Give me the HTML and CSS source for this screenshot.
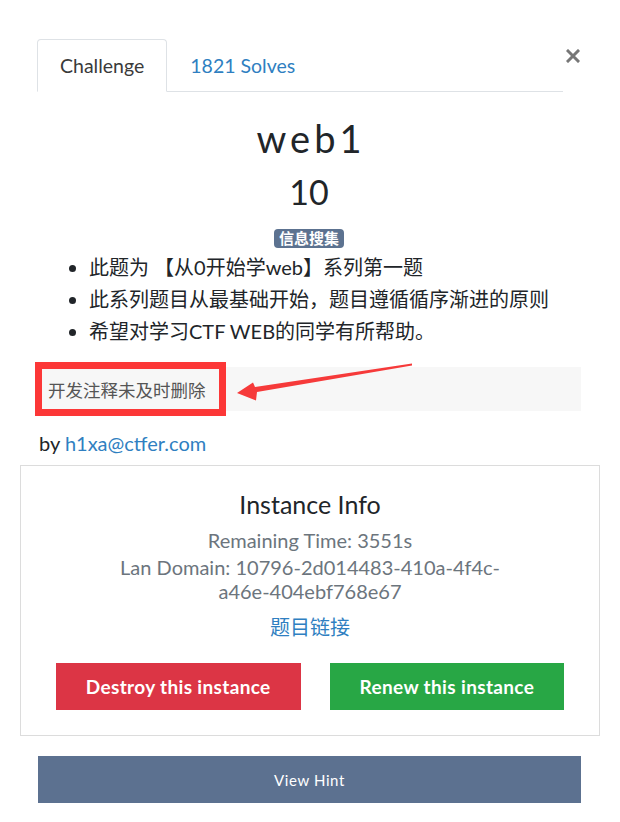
FILE: index.html
```html
<!DOCTYPE html>
<html lang="zh-CN">
<head>
<meta charset="utf-8">
<title>Challenge</title>
<link rel="stylesheet" href="styles.css">
</head>
<body>
<div class="modal">
  <div class="tabs-row">
    <ul class="tabs">
      <li class="tab active">Challenge</li>
      <li class="tab"><a href="#">1821 Solves</a></li>
    </ul>
    <button class="close" aria-label="Close">
      <svg width="14" height="14" viewBox="0 0 14 14"><path d="M2 2 L12 12 M12 2 L2 12" stroke="#777" stroke-width="3" stroke-linecap="square"/></svg>
    </button>
  </div>

  <h2 class="title">web1</h2>
  <h3 class="value">10</h3>
  <div class="tags"><span class="badge">信息搜集</span></div>

  <ul class="desc">
    <li>此题为 【从0开始学web】系列第一题</li>
    <li>此系列题目从最基础开始，题目遵循循序渐进的原则</li>
    <li>希望对学习CTF WEB的同学有所帮助。</li>
  </ul>

  <div class="code-box">
    <span class="code-text">开发注释未及时删除</span>
    <div class="mark"></div>
    <svg class="arrow" width="190" height="50" viewBox="0 0 190 50"><polygon points="182,8.5 25,32 23,27.5 7,38 26,45.5 27,37 182,10.5" fill="#f63a3a"/></svg>
  </div>

  <p class="author">by <a href="#">h1xa@ctfer.com</a></p>

  <div class="instance">
    <h4 class="inst-title">Instance Info</h4>
    <p class="inst-line">Remaining Time: 3551s</p>
    <p class="inst-line domain">Lan Domain: 10796-2d014483-410a-4f4c-a46e-404ebf768e67</p>
    <p class="inst-link"><a href="#">题目链接</a></p>
    <div class="actions">
      <button class="btn btn-danger">Destroy this instance</button>
      <button class="btn btn-success">Renew this instance</button>
    </div>
  </div>

  <button class="hint-btn">View Hint</button>
</div>
</body>
</html>
```

FILE: styles.css
```css
* { box-sizing: border-box; }
html, body { margin: 0; padding: 0; background: #fff; }
body {
  font-family: Lato, "Noto Sans CJK SC", sans-serif;
  color: #212529;
  width: 620px;
  height: 822px;
  overflow: hidden;
}
a { color: #2f7fc1; text-decoration: none; }

.modal {
  padding: 39px 39px 0 37px;
}

.tabs-row {
  display: flex;
  align-items: flex-start;
}
.tabs {
  list-style: none;
  margin: 0;
  padding: 0;
  width: 526px;
  display: flex;
  border-bottom: 1px solid #dee2e6;
}
.tab {
  font-size: 19.5px;
  line-height: 28px;
  padding: 12px 22px 11px 22px;
  border: 1px solid transparent;
  border-top-left-radius: 4px;
  border-top-right-radius: 4px;
  margin-bottom: -1px;
  color: #3a3a3a;
}
.tab.active {
  border-color: #dee2e6 #dee2e6 #fff;
  background: #fff;
}
.close {
  margin: 9px 0 0 2px;
  width: 16px;
  height: 16px;
  padding: 0;
  border: 0;
  background: none;
  display: flex;
  align-items: center;
  justify-content: center;
}

.title {
  margin: 23px 0 0;
  text-align: center;
  font-size: 38px;
  line-height: 46px;
  font-weight: 400;
  letter-spacing: 4px;
  padding-left: 4px;
}
.value {
  margin: 11px 0 0;
  text-align: center;
  font-size: 34px;
  line-height: 40px;
  font-weight: 400;
}
.tags {
  margin-top: 17px;
  text-align: center;
  line-height: 20px;
  height: 20px;
}
.badge {
  display: inline-block;
  background: #5c7290;
  color: #fff;
  font-weight: 700;
  font-size: 15px;
  line-height: 19px;
  padding: 0 5px;
  border-radius: 4px;
  vertical-align: top;
}

.desc {
  margin: 2px 0 0;
  padding: 0 0 0 52px;
  font-size: 20px;
  line-height: 32px;
}

.code-box {
  position: relative;
  margin-top: 20px;
  background: #f7f7f7;
  height: 44px;
  display: flex;
  align-items: center;
  padding-left: 11px;
}
.code-text {
  font-family: "Liberation Serif", "Noto Sans CJK SC", serif;
  font-size: 17.5px;
  color: #555;
}
.mark {
  position: absolute;
  left: -2px;
  top: -5px;
  width: 191px;
  height: 54px;
  border: 7px solid #fc3737;
}
.arrow {
  position: absolute;
  left: 193px;
  top: -12px;
}

.author {
  margin: 19px 0 0;
  font-size: 20px;
  line-height: 27px;
  padding-left: 2px;
}

.instance {
  margin: 8px -19px 0 -17px;
  border: 1px solid #dcdcdc;
  padding: 22px 0 25px;
  text-align: center;
}
.inst-title {
  margin: 0;
  font-size: 25px;
  line-height: 32px;
  font-weight: 400;
}
.inst-line {
  margin: 8px auto 0;
  max-width: 400px;
  font-size: 20px;
  line-height: 24px;
  color: #6c757d;
}
.inst-line.domain { margin-top: 3px; }
.inst-link {
  margin: 12px 0 0;
  font-size: 20px;
  line-height: 24px;
}
.actions {
  margin-top: 24px;
  display: flex;
  justify-content: center;
  gap: 29px;
}
.btn {
  border: 0;
  height: 47px;
  padding: 0 30px;
  color: #fff;
  font-family: Lato, sans-serif;
  font-weight: 700;
  font-size: 19px;
  letter-spacing: 0.35px;
}
.btn-danger { background: #dc3545; }
.btn-success { background: #28a745; }

.hint-btn {
  display: block;
  margin: 20px 0 0 1px;
  width: 543px;
  height: 47px;
  border: 0;
  background: #5c7190;
  color: #fff;
  font-family: Lato, sans-serif;
  font-size: 15px;
  letter-spacing: 0.6px;
}
```
